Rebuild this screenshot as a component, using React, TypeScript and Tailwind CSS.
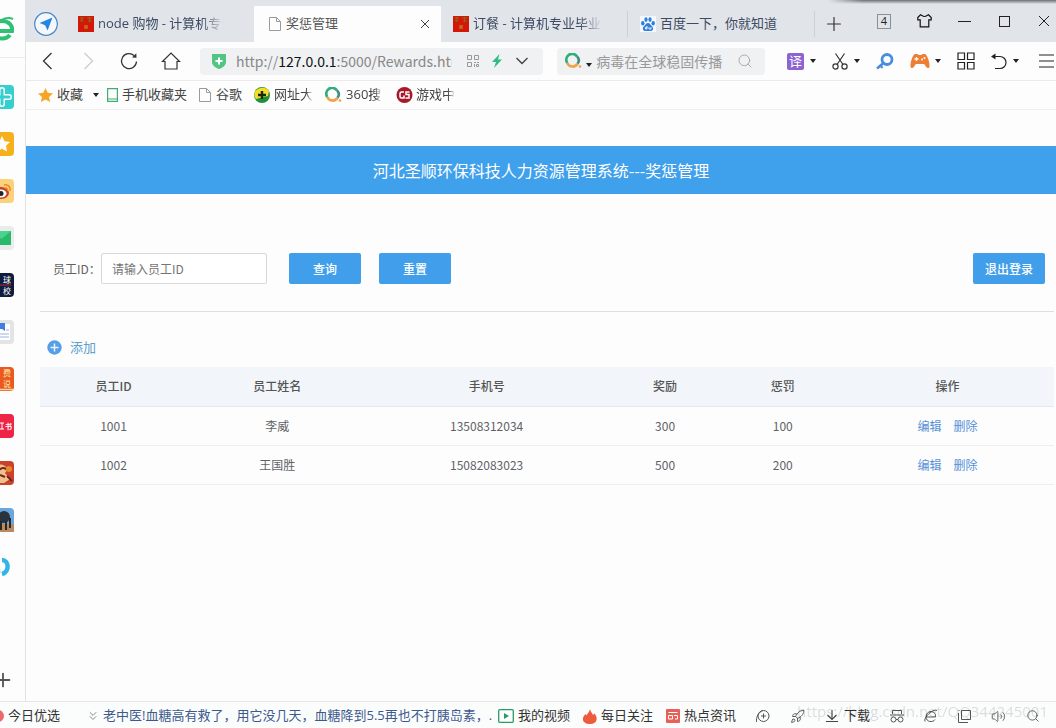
import React from 'react'
import { ChevronsDown, Plus, Rocket, Search, Volume2 } from 'lucide-react'

const rows = [
  { id: '1001', name: '李威', phone: '13508312034', reward: '300', punish: '100' },
  { id: '1002', name: '王国胜', phone: '15082083023', reward: '500', punish: '200' },
]

const fade = '[mask-image:linear-gradient(to_right,#000_82%,transparent)]'

function Caret() {
  return (
    <svg width="6" height="4" viewBox="0 0 6 4" className="shrink-0" fill="#222">
      <path d="M0 0h6L3 4z" />
    </svg>
  )
}

function PageIcon() {
  return (
    <svg width="12" height="14" viewBox="0 0 12 14" className="shrink-0" fill="none" stroke="#9a9a9a">
      <path d="M.5.5h7l4 4v9H.5zM7.5.5v4h4" />
    </svg>
  )
}

function SealIcon() {
  return (
    <svg width="16" height="16" viewBox="0 0 16 16" className="shrink-0">
      <rect width="16" height="16" fill="#d3180b" />
      <path d="M2 2h4M2 4.500h3M4 1v5M9 2h5M10 5h4M11.500 1v5" stroke="#8a6a12" strokeWidth="1.200" />
      <path d="M7 9v4M9 9v4M6.500 11h3" stroke="#b98a12" strokeWidth="1.200" />
    </svg>
  )
}

function PawIcon() {
  return (
    <svg width="16" height="16" viewBox="0 0 16 16" className="shrink-0">
      <rect width="16" height="16" fill="#f4f8fd" />
      <g fill="#2f7fdc">
        <ellipse cx="2.800" cy="7.200" rx="1.700" ry="2.200" />
        <ellipse cx="6" cy="3.600" rx="1.600" ry="2.300" />
        <ellipse cx="10" cy="3.600" rx="1.600" ry="2.300" />
        <ellipse cx="13.200" cy="7.200" rx="1.700" ry="2.200" />
        <path d="M8 7c2 0 2.600 2 4 3.200 2 1.800 1.200 4.800-1.400 4.800H5.400c-2.600 0-3.400-3-1.400-4.800C5.400 9 6 7 8 7z" />
      </g>
      <path d="M7 10v3H5.500v-1.600H7M9 11.200V13h2v-1.800" fill="none" stroke="#fff" strokeWidth=".9" />
    </svg>
  )
}

function RingIcon() {
  return (
    <svg width="17" height="16" viewBox="0 0 17 16" className="shrink-0" fill="none" strokeWidth="2.600">
      <path d="M2.300 10A5.800 5.800 0 0 1 12 3.400" stroke="#2fae7c" />
      <path d="M12 3.400A5.800 5.800 0 0 1 12.600 10.800" stroke="#3c8f86" />
      <path d="M12.600 10.800A5.800 5.800 0 0 1 2.300 10" stroke="#f0a24a" />
      <circle cx="15" cy="13.500" r="1.300" fill="#f0a24a" stroke="none" />
    </svg>
  )
}

function TabStrip() {
  return (
    <div className="relative flex h-[42px] shrink-0 items-center bg-[#e1e5e9] text-[13px] text-[#3d4a63]">
      <div className="absolute right-0 top-0 h-1 w-[228px] bg-linear-to-b from-[#6f7275] to-[#e1e5e9] [mask-image:linear-gradient(to_right,transparent,#000_15%)]" />
      <button aria-label="导航" className="ml-2 mt-1.5 w-[33px] shrink-0">
        <svg width="24" height="24" viewBox="0 0 24 24">
          <circle cx="12" cy="12" r="11.300" fill="#f3f8fd" stroke="#4a86c5" strokeWidth="1.200" />
          <path d="M18.500 5.500 13.600 18.400l-2.500-5.200-5.500-2.300z" fill="#2486e0" />
        </svg>
      </button>
      <div className="grid h-full w-[748px] min-w-0 shrink grid-cols-4 pt-1.5">
        <a href="#shop" className="flex min-w-0 items-center gap-1 pl-[11px]">
          <SealIcon />
          <span className={`w-[126px] overflow-hidden whitespace-nowrap ${fade}`}>node 购物 - 计算机专业</span>
        </a>
        <div className="flex min-w-0 items-center bg-[#fdfdfd] pl-[15px] pr-[11px] text-[#555]">
          <PageIcon />
          <span className="ml-[5px] flex-1 truncate">奖惩管理</span>
          <button aria-label="关闭标签">
            <svg width="10" height="10" viewBox="0 0 10 10" stroke="#444">
              <path d="m1 1 8 8M9 1 1 9" />
            </svg>
          </button>
        </div>
        <a href="#order" className="flex min-w-0 items-center gap-1 pl-3">
          <SealIcon />
          <span className={`w-[130px] overflow-hidden whitespace-nowrap ${fade}`}>订餐 - 计算机专业毕业设</span>
          <i className="ml-auto h-[26px] w-px bg-[#cdd1d6]" />
        </a>
        <a href="#baidu" className="flex min-w-0 items-center gap-1 pl-3">
          <PawIcon />
          <span className="truncate">百度一下，你就知道</span>
          <i className="ml-auto h-[26px] w-px shrink-0 bg-[#cdd1d6]" />
        </a>
      </div>
      <button aria-label="新标签" className="ml-2 mt-1.5 text-[#333]">
        <Plus size={22} strokeWidth={1.3} />
      </button>
      <div className="ml-auto flex items-center gap-[26px] pr-1.5 text-[#222]">
        <button className="flex h-[15px] w-[14px] items-center justify-center border border-[#8c9096] text-[11px]">4</button>
        <button aria-label="皮肤">
          <svg width="15" height="14" viewBox="0 0 15 14" fill="none" stroke="#111" strokeWidth="1.200">
            <path d="M5 1.500 3.500.8.8 3.500v2.300h2.400v7h8.600v-7h2.400V3.500L11.500.8 10 1.500q-2.500 2-5 0z" />
          </svg>
        </button>
        <button aria-label="最小化" className="flex h-4 w-[13px] items-center">
          <i className="h-px w-full bg-[#222]" />
        </button>
        <button aria-label="最大化" className="mx-0.5 size-[11px] border border-[#222]" />
        <button aria-label="关闭">
          <svg width="12" height="12" viewBox="0 0 12 12" stroke="#222">
            <path d="m1 1 10 10M11 1 1 11" />
          </svg>
        </button>
      </div>
    </div>
  )
}

function ToolBar() {
  return (
    <div className="flex h-[39px] shrink-0 items-center border-b border-[#eceaea] pr-0.5 text-[#333]">
      <div className="flex w-[174px] shrink-0 items-center pl-4">
        <button aria-label="后退" className="w-[41px]">
          <svg width="11" height="18" viewBox="0 0 11 18" fill="none" stroke="#333" strokeWidth="1.300">
            <path d="M9.500 1 1.500 9l8 8" />
          </svg>
        </button>
        <button aria-label="前进" className="w-9">
          <svg width="11" height="18" viewBox="0 0 11 18" fill="none" stroke="#ccc" strokeWidth="1.300">
            <path d="m1.500 1 8 8-8 8" />
          </svg>
        </button>
        <button aria-label="刷新" className="w-[42px]">
          <svg width="20" height="20" viewBox="0 0 20 20" fill="none" stroke="#333" strokeWidth="1.300">
            <path d="M17.500 10.500A7.500 7.500 0 1 1 15 4.500" />
            <path d="m13 6.500 4.500.3-.2-4.600z" fill="#333" stroke="none" />
          </svg>
        </button>
        <button aria-label="主页">
          <svg width="20" height="20" viewBox="0 0 20 20" fill="none" stroke="#333" strokeWidth="1.200">
            <path d="M1.500 10.500 10 2l8.500 8.500H16V18H4v-7.500z" />
          </svg>
        </button>
      </div>
      <label className="flex h-[27px] min-w-0 flex-[344] items-center rounded bg-[#f0f1f2] pl-3 pr-3.5 font-['Noto_Sans_CJK_SC',sans-serif] text-[14px] text-[#888]">
        <svg width="14" height="15" viewBox="0 0 14 15" className="mr-2.5 shrink-0">
          <path d="M0 0h14v8c0 3.500-3 5.500-7 7-4-1.500-7-3.500-7-7z" fill="#52c584" />
          <path d="M7 3.500v7M3.500 7h7" stroke="#fff" strokeWidth="2" />
        </svg>
        http://<span className="text-[#111]">127.0.0.1</span>
        <input aria-label="地址" defaultValue=":5000/Rewards.html" className="w-0 min-w-0 flex-1 bg-transparent outline-none" />
        <span className="ml-[15px] flex shrink-0 items-center gap-[13px]">
          <svg width="12" height="12" viewBox="0 0 12 12" fill="none" stroke="#999">
            <path d="M.5.5h4v4h-4zM7.500.5h4v4h-4zM.5 7.500h4v4h-4zM7 7.500h2M10 7.500h2M7.500 9v3M9.500 9.500h2v2h-2z" />
          </svg>
          <svg width="10" height="14" viewBox="0 0 10 14" fill="#2fbd85">
            <path d="M7.500 0 0 8h4L2 14l8-8.500H6z" />
          </svg>
          <svg width="14" height="8" viewBox="0 0 14 8" fill="none" stroke="#444" strokeWidth="1.400">
            <path d="m1.500 1 5.500 5.500L12.500 1" />
          </svg>
        </span>
      </label>
      <label className="ml-3.5 flex h-[27px] min-w-0 flex-[208] items-center rounded bg-[#f0f1f2] px-2 text-[14px]">
        <RingIcon />
        <span className="ml-1 mt-2"><Caret /></span>
        <input aria-label="搜索" placeholder="病毒在全球稳固传播" className="ml-1 min-w-0 flex-1 bg-transparent outline-none placeholder:text-[#999]" />
        <Search size={16} strokeWidth={1.5} className="mr-1 shrink-0 text-[#aaa]" />
      </label>
      <div className="ml-[22px] flex shrink-0 items-center gap-4">
        <button className="flex items-center gap-1.5">
          <span className="flex size-[17px] items-center justify-center rounded-xs bg-[#8d63d2] text-[13px] leading-none text-white">译</span>
          <Caret />
        </button>
        <button aria-label="截图" className="flex items-center gap-1.5">
          <svg width="16" height="17" viewBox="0 0 16 17" fill="none" stroke="#333" strokeWidth="1.200">
            <path d="m3.500.5 7.500 11M12.500.5 5 11.500" />
            <circle cx="3.500" cy="13.500" r="2.600" />
            <circle cx="12.500" cy="13.500" r="2.600" />
          </svg>
          <Caret />
        </button>
        <button aria-label="密码">
          <svg width="18" height="17" viewBox="0 0 18 17" fill="none" stroke="#4a8cdf">
            <circle cx="11" cy="6.500" r="5" strokeWidth="2.800" />
            <path d="M7.500 10 1 15.500" strokeWidth="2.600" />
            <path d="m4 12 2.500 3" strokeWidth="2" />
          </svg>
        </button>
        <button aria-label="游戏" className="flex items-center gap-[5px]">
          <svg width="20" height="16" viewBox="0 0 20 16">
            <path d="M5 1h2.500l1 1h3l1-1H15c2 0 5 9 4.500 12.500-.4 2.400-3 1.700-4-.5-.8-1.800-1.500-2-2.500-2H7c-1 0-1.700.2-2.500 2-1 2.200-3.600 2.900-4 .5C0 10 3 1 5 1z" fill="#ee7e33" />
            <path d="M6.500 4v4M4.500 6h4" stroke="#fff" strokeWidth="1.300" />
            <circle cx="12" cy="6.500" r="1" fill="#fff" />
            <circle cx="14.500" cy="5" r="1" fill="#fff" />
          </svg>
          <Caret />
        </button>
        <button aria-label="扩展">
          <svg width="18" height="18" viewBox="0 0 18 18" fill="none" stroke="#222" strokeWidth="1.200">
            <path d="M1 1h6.500v6.500H1zM10.500 1H17v6.500h-6.500zM1 10.500h6.500V17H1zM10.500 10.500H17V17h-6.500z" />
          </svg>
        </button>
        <button aria-label="恢复" className="flex items-center gap-1.5">
          <svg width="16" height="18" viewBox="0 0 16 18" fill="none" stroke="#222" strokeWidth="1.200">
            <path d="M2 4.500h7a6 6 0 0 1 0 12H4" />
            <path d="M0 4.500 4.500 1.500v6z" fill="#222" stroke="none" />
          </svg>
          <Caret />
        </button>
        <button aria-label="菜单" className="ml-1">
          <svg width="15" height="14" viewBox="0 0 15 14" stroke="#222" strokeWidth="1.200">
            <path d="M0 1h15M0 7h15M0 13h15" />
          </svg>
        </button>
      </div>
    </div>
  )
}

function Bookmarks() {
  return (
    <nav className="flex h-[29px] shrink-0 items-center border-b border-[#eee] pl-3 text-[13px] text-[#444]">
      <a href="#fav" className="mr-2.5 flex items-center gap-1">
        <svg width="15" height="14" viewBox="0 0 15 14" fill="#f5a623">
          <path d="m7.500 0 2.200 4.800 5.300.6-4 3.500 1.200 5.100-4.700-2.600L2.800 14 4 8.900 0 5.400l5.300-.6z" />
        </svg>
        收藏
      </a>
      <Caret />
      <a href="#mobile" className="ml-2 flex items-center gap-1">
        <svg width="11" height="14" viewBox="0 0 11 14" fill="none" stroke="#3fae74" strokeWidth="1.200">
          <path d="M.6.6h9.800v12.800H.6zM.6 11h9.800" />
        </svg>
        手机收藏夹
      </a>
      <a href="#google" className="ml-3 flex items-center gap-[5px]"><PageIcon />谷歌</a>
      <a href="#sites" className="ml-3 flex items-center gap-1">
        <svg width="16" height="16" viewBox="0 0 16 16">
          <circle cx="8" cy="8" r="8" fill="#1f8f3a" />
          <path d="M1 4.500C4 0 12-1 15 4l-1 5-12 3C0 10 0 7 1 4.500z" fill="#f5dc2c" />
          <path d="M8 4v8M4 8h8" stroke="#142b16" strokeWidth="2.400" />
        </svg>
        <span className={`w-[39px] overflow-hidden whitespace-nowrap ${fade}`}>网址大全</span>
      </a>
      <a href="#so" className="ml-3 flex items-center gap-1">
        <RingIcon />
        <span className={`w-9 overflow-hidden whitespace-nowrap ${fade}`}>360搜索</span>
      </a>
      <a href="#game" className="ml-3.5 flex items-center gap-[3px]">
        <svg width="17" height="16" viewBox="0 0 17 16" fill="none">
          <circle cx="8.500" cy="8" r="8" fill="#a8182b" />
          <path d="M8 5H5.500Q4 5 4 6.500v3Q4 11 5.500 11H8V8.500M13.500 5H10v2.500h3V11H9.500" stroke="#fff" strokeWidth="1.500" />
        </svg>
        <span className={`w-[39px] overflow-hidden whitespace-nowrap ${fade}`}>游戏中心</span>
      </a>
    </nav>
  )
}

const apps = [
  <><rect width="24" height="24" rx="4" fill="#35cfcf" /><path d="M12 5v14M5 12h14" stroke="#fff" strokeWidth="6" strokeLinecap="round" /><path d="M12 5v14M5 12h14" stroke="#35cfcf" strokeWidth="3" strokeLinecap="round" /></>,
  <><rect width="24" height="24" rx="4" fill="#f6b01c" /><path d="m12 4 2.500 5.200 5.500.7-4 3.900 1 5.600-5-2.700-5 2.700 1-5.600-4-3.900 5.500-.7z" fill="#fff" /></>,
  <><rect width="24" height="24" rx="4" fill="#fbd27b" /><ellipse cx="11" cy="14" rx="8" ry="6" fill="#c8402b" /><ellipse cx="11" cy="14.500" rx="5.500" ry="4" fill="#fff" /><circle cx="11" cy="14.500" r="2.500" fill="#222" /><path d="M14 6c4-1 7 2 6 6M15 9c2 0 3 1 2.500 3" fill="none" stroke="#e98a2b" strokeWidth="1.500" /></>,
  <><rect width="24" height="24" rx="4" fill="#e9ecea" /><path d="M2 5h19v14H2z" fill="#28b96b" /><path d="m2 5 9.500 8L21 5z" fill="#49d38c" /></>,
  <><rect width="24" height="24" rx="4" fill="#101c3d" /><text x="13" y="10" fontSize="8" fill="#fff">球</text><text x="13" y="21" fontSize="8" fill="#fff">校</text><path d="M3 12h18" stroke="#d33" strokeWidth=".8" /></>,
  <><rect width="24" height="24" rx="4" fill="#e3e4e6" /><path d="M5 4h15v16H5z" fill="#fff" /><path d="M5 3h10v8l-3-2H5z" fill="#3f7fe0" /><path d="M16 10h3M8 14h11M8 17h11" stroke="#9bb5dc" /></>,
  <><rect width="24" height="24" rx="4" fill="#ea5a1e" /><text x="13" y="9" fontSize="8" fill="#ffe9b0">费</text><text x="13" y="20" fontSize="8" fill="#ffe9b0">说</text><path d="M0 22.500h24" stroke="#fbd1a0" strokeWidth="1.500" /></>,
  <><rect width="24" height="24" rx="4" fill="#ee2547" /><text x="15" y="15" fontSize="7" fontWeight="700" fill="#fff">书</text><path d="M10 9h4M12 9v6M10 15h4" stroke="#fff" /></>,
  <><rect width="24" height="24" rx="4" fill="#c9432c" /><path d="M4 6q8-6 14 2l-3 4 5 6-6 4H5z" fill="#f0c08e" /><path d="M9 9q5-4 8 0M10 14l5 2M17 15l5 5" stroke="#73271a" strokeWidth="2" fill="none" /><circle cx="19" cy="8" r="3" fill="#e9892e" /></>,
  <><rect width="24" height="24" rx="4" fill="#6aa5dc" /><path d="M0 16h24v8H0z" fill="#b98a60" /><circle cx="14" cy="9" r="6" fill="#28333d" /><path d="M11 13v9M16 13v9M20 10v10" stroke="#2a2725" strokeWidth="2" /></>,
  <><path d="M12 5c7 0 8 12 0 14" fill="none" stroke="#33b4e8" strokeWidth="4.500" /><path d="M4 13c4-2 7 0 7 5H4z" fill="#c9eaf8" /></>,
]

function SideBar() {
  return (
    <aside className="flex w-[26px] shrink-0 flex-col overflow-hidden border-r border-[#e3e3e6]">
      <div className="flex h-[58px] shrink-0 items-center border-b border-[#ebebeb]">
        <svg width="26" height="26" viewBox="0 0 26 26" className="-ml-3 shrink-0" fill="none" stroke="#2fc076">
          <path d="M4 15h20c1-5-3-10-10-10C7 5 4 9 4 14c0 9 13 11 18 5" strokeWidth="4" />
          <path d="M2 15C8 5 18 0 25 3" strokeWidth="2" />
        </svg>
      </div>
      <div className="mt-[27px] flex flex-col gap-[23px]">
        {apps.map((art, i) => (
          <button key={i} aria-label={`应用${i + 1}`} className="-ml-2.5 size-6">
            <svg width="24" height="24" viewBox="0 0 24 24">{art}</svg>
          </button>
        ))}
      </div>
      <button aria-label="添加应用" className="-ml-2 mb-2.5 mt-auto text-[#555]">
        <Plus size={22} strokeWidth={2} />
      </button>
    </aside>
  )
}

const btn = 'h-[31px] w-[72px] rounded-xs bg-[#409eeb] text-[12px] font-medium text-white'

function RewardsPage() {
  return (
    <main className="min-h-0 flex-1 overflow-hidden bg-[#fdfdfd] pt-9 font-['Noto_Sans_CJK_SC',sans-serif] text-[12px] text-[#606266]">
      <h1 className="flex h-12 items-center justify-center bg-[#3fa0ec] text-[16px] text-white">
        河北圣顺环保科技人力资源管理系统---奖惩管理
      </h1>
      <form className="mt-[59px] flex items-center pl-[27px] pr-[11px]" onSubmit={(e) => e.preventDefault()}>
        <label htmlFor="staff" className="w-12 whitespace-nowrap">员工ID：</label>
        <input
          id="staff"
          placeholder="请输入员工ID"
          className="h-[31px] w-[166px] rounded-xs border border-[#d6d9df] bg-white px-2.5 outline-none placeholder:text-[#757575]"
        />
        <button className={`${btn} ml-[22px]`}>查询</button>
        <button type="reset" className={`${btn} ml-[18px]`}>重置</button>
        <button type="button" className={`${btn} ml-auto`}>退出登录</button>
      </form>
      <div className="ml-3.5 mr-0.5">
        <hr className="mt-[27px] border-[#dcdfe3]" />
        <button className="ml-[7px] mt-[25px] flex h-5 items-center gap-2 text-[13px] text-[#5a9fce]">
          <svg width="15" height="15" viewBox="0 0 15 15">
            <circle cx="7.500" cy="7.500" r="7.200" fill="#559fe6" />
            <path d="M7.500 3.500v8M3.500 7.500h8" stroke="#e8f3fd" strokeWidth="1.500" />
          </svg>
          添加
        </button>
        <table className="mt-2.5 w-full table-fixed text-center">
          <thead>
            <tr className="h-[39px] border-b border-[#e4e7ef] bg-[#f2f5f9] text-[#555]">
              <th className="w-[14.5%] font-medium">员工ID</th>
              <th className="w-[17.8%] font-medium">员工姓名</th>
              <th className="w-[23.5%] font-medium">手机号</th>
              <th className="w-[11.7%] font-medium">奖励</th>
              <th className="w-[11.5%] font-medium">惩罚</th>
              <th className="w-[21%] font-medium">操作</th>
            </tr>
          </thead>
          <tbody>
            {rows.map((r) => (
              <tr key={r.id} className="h-[39px] border-b border-[#ebeef3]">
                <td>{r.id}</td>
                <td>{r.name}</td>
                <td>{r.phone}</td>
                <td>{r.reward}</td>
                <td>{r.punish}</td>
                <td className="text-[#5590d6]">
                  <a href="#edit" className="mr-3">编辑</a>
                  <a href="#delete">删除</a>
                </td>
              </tr>
            ))}
          </tbody>
        </table>
      </div>
    </main>
  )
}

function StatusBar() {
  return (
    <footer className="relative flex h-[27px] shrink-0 items-center border-t border-[#e3e5e6] bg-[#fbfcfc] pr-4 pt-0.5 text-[13px] whitespace-nowrap text-[#333]">
      <svg width="8" height="14" viewBox="0 0 8 14"><circle cx="-2" cy="7" r="6" fill="#ee6a6a" /></svg>
      <a href="#today">今日优选</a>
      <ChevronsDown size={14} strokeWidth={1.3} className="ml-[26px] mr-[3px] shrink-0 text-[#666]" />
      <a href="#news" className="min-w-0 flex-1 overflow-hidden text-[#3c5a8c]">
        老中医!血糖高有救了，用它没几天，血糖降到5.5再也不打胰岛素，.
      </a>
      <a href="#video" className="flex items-center gap-1">
        <svg width="16" height="14" viewBox="0 0 16 14">
          <rect x=".7" y=".7" width="14.600" height="12.600" rx="1" fill="none" stroke="#2a9d67" strokeWidth="1.300" />
          <path d="m6 4 5 3-5 3z" fill="#2a9d67" />
        </svg>
        我的视频
      </a>
      <a href="#daily" className="ml-[13px] flex items-center gap-1">
        <svg width="14" height="15" viewBox="0 0 14 15">
          <path d="M7 0c.5 3 2.500 4 3 6l1.500-1.500C13 6.500 14 8.500 13.500 11c-.6 2.700-3 4-6.500 4S.5 13.500 0 11c-.4-2.500 1-4.500 2.500-6l1 1.500C4.500 4.500 6.500 3 7 0z" fill="#ee5a3c" />
        </svg>
        每日关注
      </a>
      <a href="#hot" className="ml-[13px] flex items-center gap-1">
        <svg width="14" height="14" viewBox="0 0 14 14">
          <rect width="14" height="14" rx="1" fill="#e8605a" />
          <path d="M2.500 3.500h9M2.500 6.500h4v3.500h-4zM8 6.500h3.500V10H9" fill="none" stroke="#fff" />
        </svg>
        热点资讯
      </a>
      <div className="ml-5 flex shrink-0 items-center gap-5 text-[#555]">
        <button aria-label="加速">
          <svg width="14" height="14" viewBox="0 0 14 14" fill="none" stroke="#555">
            <circle cx="7.500" cy="7" r="5.500" />
            <path d="M7.500 4.500v5M5 7h5M.5 13C0 8 2.500 3 7 1.500" />
          </svg>
        </button>
        <button aria-label="火箭"><Rocket size={15} strokeWidth={1.5} /></button>
        <button className="flex items-center gap-[5px] text-[#333]">
          <svg width="14" height="14" viewBox="0 0 14 14" fill="none" stroke="#444" strokeWidth="1.100">
            <path d="M7 1v9.500M2.500 6 7 10.500 11.500 6M1 12.500h12" />
          </svg>
          下载
        </button>
        <button aria-label="无痕">
          <svg width="14" height="14" viewBox="0 0 14 14" fill="none" stroke="#555">
            <path d="M2.500 5V1.500h9V5M0 6h14M6 10.500h2" />
            <circle cx="3.500" cy="10.500" r="2.500" />
            <circle cx="10.500" cy="10.500" r="2.500" />
          </svg>
        </button>
        <button aria-label="兼容模式">
          <svg width="14" height="14" viewBox="0 0 14 14" fill="none" stroke="#555">
            <path d="M2.500 8h9c.5-3-1.500-5.500-4.500-5.500S2 5 2 8c0 5 7 6 9 2.500M1 12.500C-1 9 9-1 13 1.500" />
          </svg>
        </button>
        <button aria-label="窗口">
          <svg width="13" height="13" viewBox="0 0 13 13" fill="none" stroke="#555">
            <path d="M3.500.5h9v9h-9zM.5 3v9.500H10M.5.5h1" />
          </svg>
        </button>
        <button aria-label="声音"><Volume2 size={15} strokeWidth={1.4} /></button>
        <button aria-label="查找"><Search size={14} strokeWidth={1.5} /></button>
      </div>
      <span className="pointer-events-none absolute -top-0.5 right-2 text-[15px] text-black/15">https://blog.csdn.net/QQ344245001</span>
    </footer>
  )
}

export default function App() {
  return (
    <div className="flex h-screen flex-col bg-[#fdfdfd] font-['Open_Sans','Noto_Sans_CJK_SC',sans-serif]">
      <div className="flex min-h-0 flex-1">
        <SideBar />
        <div className="flex min-w-0 flex-1 flex-col">
          <TabStrip />
          <ToolBar />
          <Bookmarks />
          <RewardsPage />
        </div>
      </div>
      <StatusBar />
    </div>
  )
}
